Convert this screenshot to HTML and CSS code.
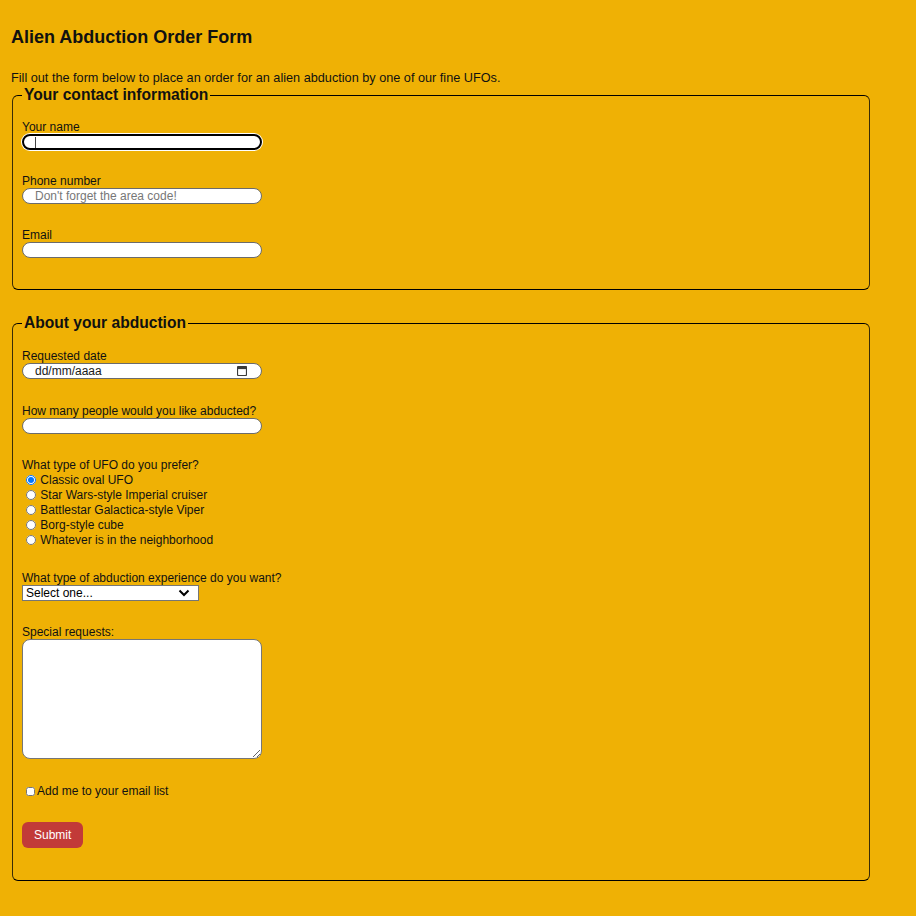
FILE: index.html
```html
<!DOCTYPE html>
<html lang="en">
<head>
<meta charset="utf-8">
<title>Alien Abduction Order Form</title>
<link rel="stylesheet" href="styles.css">
</head>
<body>
  <h1 class="title">Alien Abduction Order Form</h1>
  <p class="intro">Fill out the form below to place an order for an alien abduction by one of our fine UFOs.</p>
  <form class="order-form">
    <fieldset class="section">
      <legend class="section-title">Your contact information</legend>
      <div class="field">
        <label class="field-label" for="name">Your name</label>
        <input class="text-input is-focused" id="name" type="text">
      </div>
      <div class="field">
        <label class="field-label" for="phone">Phone number</label>
        <input class="text-input" id="phone" type="tel" placeholder="Don't forget the area code!">
      </div>
      <div class="field">
        <label class="field-label" for="email">Email</label>
        <input class="text-input" id="email" type="email">
      </div>
    </fieldset>

    <fieldset class="section section-second">
      <legend class="section-title">About your abduction</legend>
      <div class="field field-wide">
        <label class="field-label" for="date">Requested date</label>
        <div class="date-wrap">
          <input class="text-input date-input" id="date" type="text" placeholder="dd/mm/aaaa">
          <svg class="date-icon" width="10" height="10" viewBox="0 0 10 10" aria-hidden="true">
            <rect x="0.5" y="0.5" width="9" height="9" rx="1" fill="none" stroke="#3b3b3b" stroke-width="1.2"/>
            <rect x="0.5" y="0.5" width="9" height="2.6" fill="#3b3b3b"/>
          </svg>
        </div>
      </div>
      <div class="field">
        <label class="field-label" for="count">How many people would you like abducted?</label>
        <input class="text-input" id="count" type="number">
      </div>
      <div class="field">
        <div class="field-label">What type of UFO do you prefer?</div>
        <div class="radio-list">
          <label class="choice"><input class="radio" type="radio" name="ufo" checked> Classic oval UFO</label>
          <label class="choice"><input class="radio" type="radio" name="ufo"> Star Wars-style Imperial cruiser</label>
          <label class="choice"><input class="radio" type="radio" name="ufo"> Battlestar Galactica-style Viper</label>
          <label class="choice"><input class="radio" type="radio" name="ufo"> Borg-style cube</label>
          <label class="choice"><input class="radio" type="radio" name="ufo"> Whatever is in the neighborhood</label>
        </div>
      </div>
      <div class="field">
        <label class="field-label" for="experience">What type of abduction experience do you want?</label>
        <div class="select-wrap">
          <select class="select" id="experience">
            <option>Select one...</option>
          </select>
          <svg class="select-arrow" width="12" height="8" viewBox="0 0 12 8" aria-hidden="true">
            <path d="M1.5 1.5 L6 6 L10.5 1.5" fill="none" stroke="#000" stroke-width="2"/>
          </svg>
        </div>
      </div>
      <div class="field field-wide">
        <label class="field-label" for="requests">Special requests:</label>
        <textarea class="textarea" id="requests"></textarea>
      </div>
      <div class="field">
        <label class="check-line"><input class="checkbox" type="checkbox">Add me to your email list</label>
      </div>
      <div class="field field-wide">
        <button class="submit" type="submit">Submit</button>
      </div>
    </fieldset>
  </form>
</body>
</html>
```

FILE: styles.css
```css
html {
  background: #efb105;
}
body {
  margin: 0;
  padding: 10px;
  font-family: "Liberation Sans", Arial, sans-serif;
  font-size: 12px;
  color: #111;
  background: #efb105;
}
.title {
  font-size: 18px;
  line-height: 21px;
  font-weight: bold;
  margin: 17px 0 23px 1px;
}
.intro {
  margin: 0 0 1px 1px;
  font-size: 12.7px;
  line-height: 14px;
}
.order-form {
  max-width: 862px;
}
.section {
  margin: 0 2px 24px;
  padding: 16px 9px 7px;
  border: 1px solid #000;
  border-left-color: #3a2c06;
  border-right-color: #3a2c06;
  border-radius: 6px;
}
.section-second {
  padding-top: 17px;
}
.section-title {
  font-size: 15.6px;
  line-height: 18px;
  font-weight: bold;
  padding: 0 2px;
  color: #111;
}
.field {
  margin-bottom: 24px;
}
.field-wide {
  margin-bottom: 25px;
}
.field-label {
  display: block;
  line-height: 14px;
}
.text-input {
  display: block;
  box-sizing: border-box;
  width: 240px;
  height: 16px;
  margin: 0;
  padding: 0 12px;
  border: 1px solid #6b6b6b;
  border-radius: 8px;
  background: #fff;
  font-family: "Liberation Sans", Arial, sans-serif;
  font-size: 12px;
  color: #111;
}
.text-input::placeholder {
  color: #777;
}
.text-input.is-focused {
  border: 2px solid #000;
  padding-left: 11px;
  background: #fff linear-gradient(#444, #444) no-repeat 11px center / 1px 11px;
  box-shadow: 0 0 0 1px #fff;
}
.date-wrap {
  position: relative;
  width: 240px;
}
.date-input::placeholder {
  color: #1a1a1a;
}
.date-icon {
  position: absolute;
  right: 15px;
  top: 3px;
}
.radio-list {
  display: flex;
  flex-direction: column;
}
.choice {
  display: flex;
  align-items: center;
  height: 15px;
  white-space: pre;
}
.radio {
  width: 10px;
  height: 10px;
  margin: 0 1px 0 4px;
}
.select-wrap {
  position: relative;
  width: 177px;
}
.select {
  display: block;
  appearance: none;
  box-sizing: border-box;
  width: 177px;
  height: 16px;
  margin: 0;
  padding: 0 3px;
  border: 1px solid #767676;
  border-radius: 0;
  background: #fff;
  font-family: "Liberation Sans", Arial, sans-serif;
  font-size: 12px;
  color: #000;
}
.select-arrow {
  position: absolute;
  right: 9px;
  top: 4px;
  pointer-events: none;
}
.textarea {
  display: block;
  box-sizing: border-box;
  width: 240px;
  height: 120px;
  margin: 0;
  border: 1px solid #767676;
  border-radius: 8px;
  background: #fff;
}
.check-line {
  display: flex;
  align-items: center;
  height: 14px;
}
.checkbox {
  width: 9px;
  height: 9px;
  margin: 0 2px 0 4px;
}
.submit {
  display: block;
  height: 26px;
  padding: 0 12px;
  border: none;
  border-radius: 6px;
  background: #c23a38;
  color: #fff;
  font-family: "Liberation Sans", Arial, sans-serif;
  font-size: 12px;
}
```
